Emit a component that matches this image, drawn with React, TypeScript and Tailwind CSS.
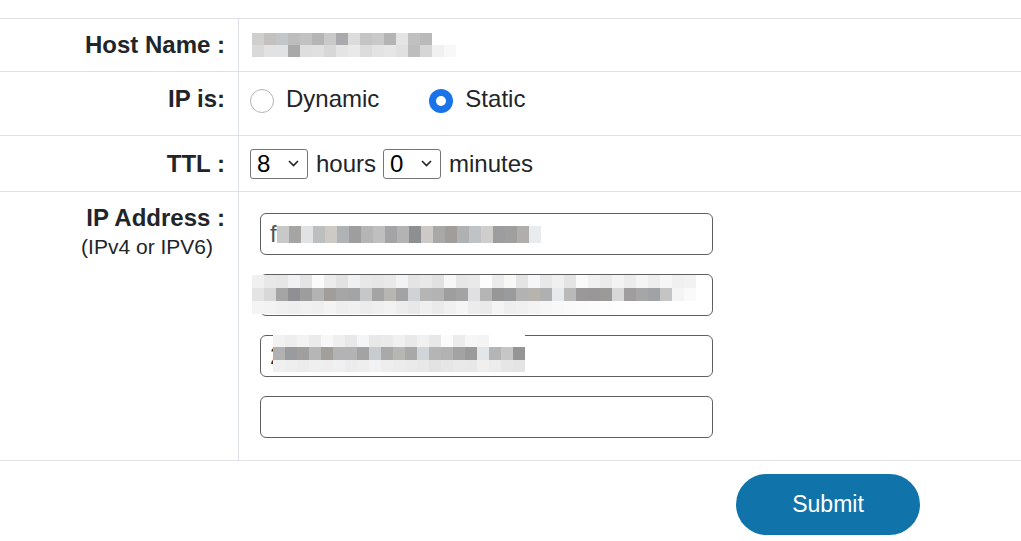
import React from "react";

const FONT = "font-['Liberation_Sans',Arial,sans-serif]";

function Blocks({ cells, h }: { cells: string[]; h: string }) {
  return (
    <div className="flex">
      {cells.map((c, i) => (
        <div key={i} className={`w-[12px] ${h} ${c}`} />
      ))}
    </div>
  );
}

const hostTop = [
  "bg-[#cfcfcf]", "bg-[#c4c0be]", "bg-[#c3c6c9]", "bg-[#bdbdbd]", "bg-[#c2c2c2]", "bg-[#b5b5b5]", "bg-[#c9c9c9]", "bg-[#a9aaad]",
  "bg-[#dcdcdc]", "bg-[#c4c4c4]", "bg-[#c9c9c9]", "bg-[#b4b4b4]", "bg-[#e4e4e4]", "bg-[#c0c0c0]", "bg-[#b9b9b9]", "bg-[#ffffff]",
];
const hostBot = [
  "bg-[#d9d9d9]", "bg-[#e2e2e2]", "bg-[#e0e2e4]", "bg-[#a9a9a9]", "bg-[#dedede]", "bg-[#e0e0e0]", "bg-[#d7d7d7]", "bg-[#e4e4e4]",
  "bg-[#e9e9e9]", "bg-[#dcdcdc]", "bg-[#e3e3e3]", "bg-[#e6e6e6]", "bg-[#e0e0e0]", "bg-[#bdbdbd]", "bg-[#d6d6d6]", "bg-[#f1f1f1]",
  "bg-[#f8f8f8]",
];
const ip1 = [
  "bg-[#c8c8c8]", "bg-[#a7a5a3]", "bg-[#e0e2e4]", "bg-[#bdbebf]", "bg-[#cdcac6]", "bg-[#b0b3b6]", "bg-[#9e9e9e]", "bg-[#b5b5b5]",
  "bg-[#bfbfbf]", "bg-[#a3a4a6]", "bg-[#b3b3b3]", "bg-[#8e8f92]", "bg-[#ccc9c6]", "bg-[#a8a8a8]", "bg-[#a09d9a]", "bg-[#b0b1b3]",
  "bg-[#c0c3c6]", "bg-[#d0cecc]", "bg-[#9d9d9f]", "bg-[#9f9f9f]", "bg-[#b1adaa]", "bg-[#e8ecef]",
];
const ip2Top = [
  "bg-[#f0f0f0]", "bg-[#e8e8e8]", "bg-[#e6e6e6]", "bg-[#f0f1f2]", "bg-[#e4e4e4]", "bg-[#fbfbfb]", "bg-[#ececec]", "bg-[#e2e2e2]",
  "bg-[#f0f1f3]", "bg-[#e8e8e8]", "bg-[#e6e6e6]", "bg-[#e9e9e9]", "bg-[#f2f3f4]", "bg-[#e4e4e4]", "bg-[#e8e8e8]", "bg-[#e1e1e1]",
  "bg-[#f7f7f7]", "bg-[#e6e6e6]", "bg-[#e9e9e9]", "bg-[#fdfdfd]", "bg-[#ececec]", "bg-[#f8f8f6]", "bg-[#e4e4e4]", "bg-[#f4f6f8]",
  "bg-[#e8e8e8]", "bg-[#f0f0f0]", "bg-[#e4e4e4]", "bg-[#fafafa]", "bg-[#f1f1f1]", "bg-[#ebebeb]", "bg-[#f3f3f3]", "bg-[#ececec]",
  "bg-[#f5f5f5]", "bg-[#eeeeee]", "bg-[#f6f6f6]", "bg-[#f0f0f0]", "bg-[#f2f2f2]",
];
const ip2Mid = [
  "bg-[#e4e4e4]", "bg-[#d8d8d8]", "bg-[#a5a5a5]", "bg-[#8f9094]", "bg-[#9d9d9d]", "bg-[#b3b3b3]", "bg-[#a19d9a]", "bg-[#a6a6a6]",
  "bg-[#a3a4a6]", "bg-[#c6c7c9]", "bg-[#a4a4a4]", "bg-[#b8b6b3]", "bg-[#a3a3a3]", "bg-[#cfd3d6]", "bg-[#b5b5b5]", "bg-[#b3b3b3]",
  "bg-[#9e9e9e]", "bg-[#a3a3a3]", "bg-[#dfe0e1]", "bg-[#b5b5b5]", "bg-[#979797]", "bg-[#9a9b9d]", "bg-[#b2b2b2]", "bg-[#b7b3ae]",
  "bg-[#b0b0b0]", "bg-[#e6eaee]", "bg-[#b9b9b9]", "bg-[#9a9898]", "bg-[#999797]", "bg-[#9c9a99]", "bg-[#d8d8d8]", "bg-[#a09e9c]",
  "bg-[#a6a6a6]", "bg-[#a0a3a6]", "bg-[#c4c4c4]", "bg-[#f4f4f4]", "bg-[#fafafa]",
];
const ip2Bot = [
  "bg-[#f4f4f4]", "bg-[#f3f3f3]", "bg-[#f0f0f0]", "bg-[#eeeeee]", "bg-[#f1f1f1]", "bg-[#efefef]", "bg-[#f3f3f3]", "bg-[#eeeeee]",
  "bg-[#f0f0f0]", "bg-[#ececec]", "bg-[#efefef]", "bg-[#f2f2f2]", "bg-[#ececec]", "bg-[#e8e8e8]", "bg-[#efefef]", "bg-[#eaeaea]",
  "bg-[#f0f0f0]", "bg-[#f5f5f5]", "bg-[#ececec]", "bg-[#eaeaea]", "bg-[#f4f4f4]", "bg-[#eeeeee]", "bg-[#f0f0f0]", "bg-[#f3f3f3]",
  "bg-[#f6f6f6]", "bg-[#f8f8f8]", "bg-[#fafafa]", "bg-[#fbfbfb]", "bg-[#fcfcfc]", "bg-[#fdfdfd]", "bg-[#fefefe]", "bg-[#ffffff]",
  "bg-[#ffffff]", "bg-[#ffffff]", "bg-[#ffffff]", "bg-[#ffffff]", "bg-[#ffffff]",
];
const ip3Top = [
  "bg-[#f2f2f2]", "bg-[#eeeeee]", "bg-[#f3f3f3]", "bg-[#ebebeb]", "bg-[#f8f8f8]", "bg-[#efefef]", "bg-[#e8e8e8]", "bg-[#f3f5f7]",
  "bg-[#e8e8e8]", "bg-[#eaeaea]", "bg-[#f0f0f0]", "bg-[#e9e9e9]", "bg-[#f1f1f1]", "bg-[#e8e8e8]", "bg-[#fbfbfb]", "bg-[#ececec]",
  "bg-[#f6f6f6]", "bg-[#f4f4f4]", "bg-[#ffffff]", "bg-[#ffffff]", "bg-[#ffffff]",
];
const ip3Mid = [
  "bg-[#b1b1b1]", "bg-[#9a9b9e]", "bg-[#a09f9d]", "bg-[#b6b6b6]", "bg-[#a29e9a]", "bg-[#b2b3b5]", "bg-[#b3b3b3]", "bg-[#a3a3a3]",
  "bg-[#c8ccd0]", "bg-[#a9a9a9]", "bg-[#b8b6b3]", "bg-[#a8a8a8]", "bg-[#d0d5da]", "bg-[#b5b5b5]", "bg-[#b2b2b2]", "bg-[#a3a3a3]",
  "bg-[#9a9a9a]", "bg-[#e3e6e9]", "bg-[#b4b5b7]", "bg-[#c6c6c6]", "bg-[#959595]",
];
const ip3Bot = [
  "bg-[#f0f0f0]", "bg-[#eeeeee]", "bg-[#ececec]", "bg-[#efefef]", "bg-[#eeeeee]", "bg-[#f0f0f0]", "bg-[#ececec]", "bg-[#eeeeee]",
  "bg-[#f0f2f4]", "bg-[#eeeeee]", "bg-[#ececec]", "bg-[#eaeaea]", "bg-[#e8e8e8]", "bg-[#e3e3e3]", "bg-[#e6e6e6]", "bg-[#e9e9e9]",
  "bg-[#e8e8e8]", "bg-[#f1efee]", "bg-[#ececec]", "bg-[#e6e6e6]", "bg-[#e4e4e4]",
];

function Chevron() {
  return (
    <svg width="11" height="7" viewBox="0 0 11 7" fill="none">
      <path d="M1 1l4.5 4.5L10 1" stroke="#222" strokeWidth="1.6" />
    </svg>
  );
}

function Select({ value }: { value: string }) {
  return (
    <div className="flex h-[30px] w-[58px] items-center justify-between rounded-[3px] border border-[#767676] bg-white pl-[6px] pr-[8px] text-[24px] leading-none text-black">
      <span>{value}</span>
      <Chevron />
    </div>
  );
}

function Label({ children }: { children: React.ReactNode }) {
  return (
    <div className="w-[239px] shrink-0 border-r border-[#dee2e6] pr-[13px] text-right text-[24px] font-bold leading-[28px] text-[#212529]">
      {children}
    </div>
  );
}

export default function App() {
  return (
    <div className={`${FONT} h-[541px] w-[1021px] overflow-hidden bg-white text-[#212529]`}>
      <div className="h-[18px]" />
      <div className="border-t border-[#dee2e6]">
        {/* Host Name */}
        <div className="flex h-[53px] items-stretch border-b border-[#dee2e6]">
          <Label>
            <div className="flex h-full items-center justify-end pb-[1px]">Host Name :</div>
          </Label>
          <div className="flex items-center pl-[13px]">
            <div className="flex flex-col">
              <Blocks cells={hostTop} h="h-[12px]" />
              <Blocks cells={hostBot} h="h-[12px]" />
            </div>
          </div>
        </div>
        {/* IP is */}
        <div className="flex h-[64px] items-stretch border-b border-[#dee2e6]">
          <Label>
            <div className="flex h-full items-center justify-end pb-[10px]">IP is:</div>
          </Label>
          <div className="flex items-center pb-[10px] pl-[11px] text-[24px]">
            <div className="mt-[4px] h-[24px] w-[24px] rounded-full border border-[#b5b5b5] bg-white" />
            <span className="ml-[12px]">Dynamic</span>
            <div className="ml-[50px] mt-[4px] flex h-[24px] w-[24px] items-center justify-center rounded-full bg-[#1a73e8]">
              <div className="h-[10px] w-[10px] rounded-full bg-white" />
            </div>
            <span className="ml-[12px]">Static</span>
          </div>
        </div>
        {/* TTL */}
        <div className="flex h-[56px] items-stretch border-b border-[#dee2e6]">
          <Label>
            <div className="flex h-full items-center justify-end">TTL :</div>
          </Label>
          <div className="flex items-center pl-[11px] text-[24px]">
            <Select value="8" />
            <span className="ml-[8px] mr-[7px]">hours</span>
            <Select value="0" />
            <span className="ml-[8px]">minutes</span>
          </div>
        </div>
        {/* IP Address */}
        <div className="flex items-stretch border-b border-[#dee2e6]">
          <Label>
            <div className="pt-[12px]">IP Address :</div>
            <div className="mt-[3px] pr-[12px] text-[21px] font-normal leading-[24px]">(IPv4 or IPV6)</div>
          </Label>
          <div className="flex flex-col gap-[19px] pb-[22px] pl-[21px] pt-[21px]">
            <div className="flex h-[42px] w-[453px] items-center rounded-[6px] border border-[#5f5f5f] pl-[9px] text-[24px] text-[#555]">
              <span>f</span>
              <Blocks cells={ip1} h="h-[17px]" />
            </div>
            <div className="relative h-[42px] w-[453px] rounded-[6px] border border-[#5f5f5f]">
              <div className="absolute left-[-9px] top-[0px] flex flex-col">
                <Blocks cells={ip2Top} h="h-[13px]" />
                <Blocks cells={ip2Mid} h="h-[13px]" />
                <Blocks cells={ip2Bot} h="h-[13px]" />
              </div>
            </div>
            <div className="relative flex h-[42px] w-[453px] items-center rounded-[6px] border border-[#5f5f5f] pl-[9px] text-[24px] text-[#333]">
              <span>2</span>
              <div className="absolute left-[12px] top-[-1px] flex flex-col">
                <Blocks cells={ip3Top} h="h-[12px]" />
                <Blocks cells={ip3Mid} h="h-[13px]" />
                <Blocks cells={ip3Bot} h="h-[12px]" />
              </div>
            </div>
            <div className="h-[42px] w-[453px] rounded-[6px] border border-[#5f5f5f]" />
          </div>
        </div>
      </div>
      <div className="flex pl-[736px] pt-[13px]">
        <button className="h-[61px] w-[184px] rounded-full bg-[#1074ab] text-[23px] text-white">Submit</button>
      </div>
    </div>
  );
}
